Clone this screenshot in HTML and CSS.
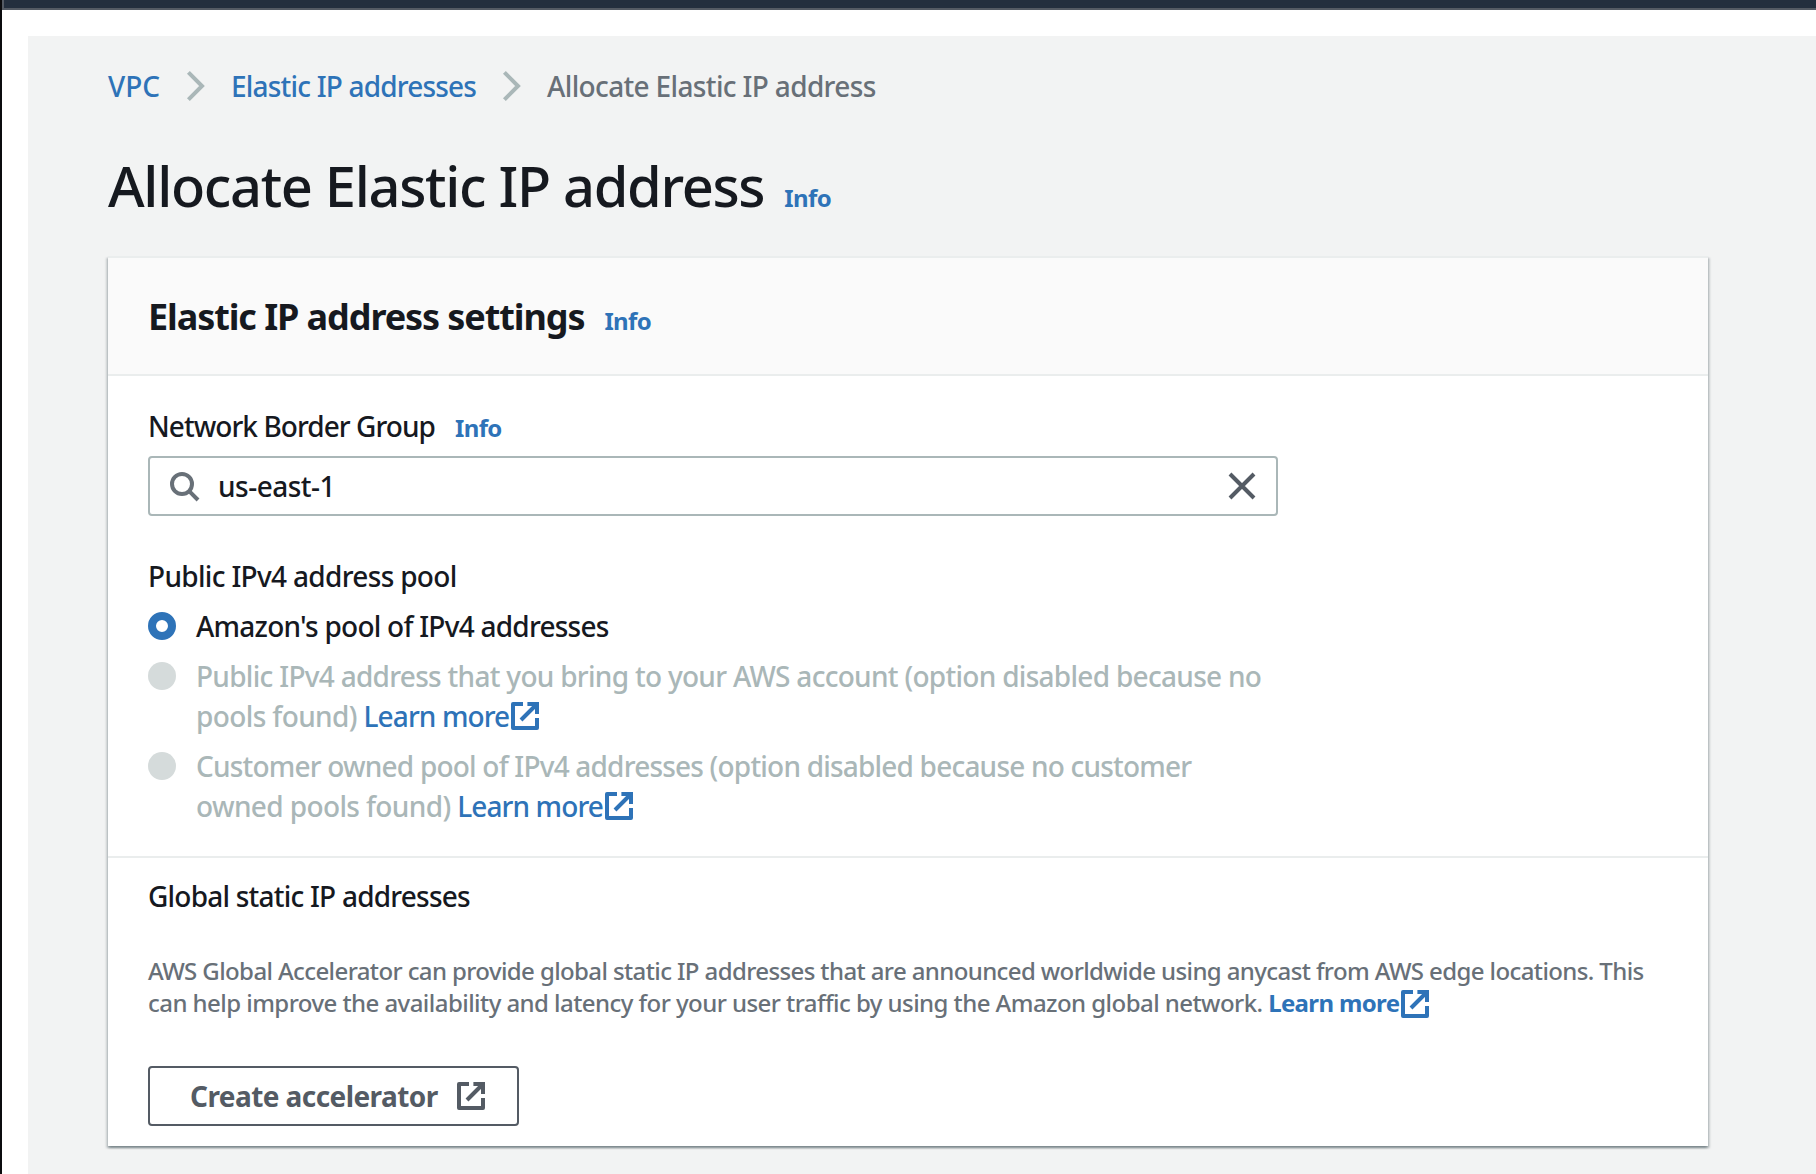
FILE: index.html
```html
<!DOCTYPE html>
<html lang="en">
<head>
<meta charset="utf-8">
<title>Allocate Elastic IP address</title>
<link rel="stylesheet" href="styles.css">
</head>
<body>
<svg class="defs" aria-hidden="true">
  <symbol id="external" viewBox="0 0 16 16"><path d="M7 2H2v12h12V9" fill="none" stroke="currentColor" stroke-width="2" stroke-linejoin="round"/><path d="M9.2 2H14v5M6 10l8-8" fill="none" stroke="currentColor" stroke-width="2"/></symbol>
  <symbol id="chevron" viewBox="0 0 16 16"><path d="M4.2 1.2L11 8l-6.8 6.8" fill="none" stroke="currentColor" stroke-width="2"/></symbol>
  <symbol id="search" viewBox="0 0 16 16"><circle cx="7" cy="7" r="5" fill="none" stroke="currentColor" stroke-width="2"/><path d="M10.6 10.6L15 15" fill="none" stroke="currentColor" stroke-width="2"/></symbol>
  <symbol id="close" viewBox="0 0 16 16"><path d="M2 2l12 12M14 2L2 14" fill="none" stroke="currentColor" stroke-width="2"/></symbol>
</svg>
<div class="window">
  <header class="topbar"></header>
  <main class="content">
    <nav class="breadcrumbs">
      <a class="link">VPC</a>
      <svg class="icon crumb-sep"><use href="#chevron"/></svg>
      <a class="link crumb-parent">Elastic IP addresses</a>
      <svg class="icon crumb-sep"><use href="#chevron"/></svg>
      <span class="crumb-current">Allocate Elastic IP address</span>
    </nav>
    <div class="page-heading">
      <h1 class="page-title">Allocate Elastic IP address</h1>
      <a class="info">Info</a>
    </div>
    <section class="card">
      <div class="card-header">
        <h2 class="card-title">Elastic IP address settings</h2>
        <a class="info">Info</a>
      </div>
      <div class="card-body">
        <div class="field-label"><span class="border-label">Network Border Group</span><a class="info">Info</a></div>
        <div class="search-input">
          <svg class="icon search-icon"><use href="#search"/></svg>
          <span class="search-value">us-east-1</span>
          <svg class="icon close-icon"><use href="#close"/></svg>
        </div>
        <div class="field-label pool-label">Public IPv4 address pool</div>
        <div class="options">
          <div class="option">
            <span class="radio radio-checked"></span>
            <div class="option-text">Amazon's pool of IPv4 addresses</div>
          </div>
          <div class="option option-disabled">
            <span class="radio"></span>
            <div class="option-text"><span class="byoip">Public IPv4 address that you bring to your AWS account (option disabled because no</span><br><span class="option-tail">pools found) </span><a class="link learn">Learn more<svg class="icon external"><use href="#external"/></svg></a></div>
          </div>
          <div class="option option-disabled">
            <span class="radio"></span>
            <div class="option-text"><span class="customer">Customer owned pool of IPv4 addresses (option disabled because no customer</span><br><span class="option-tail">owned pools found) </span><a class="link learn">Learn more<svg class="icon external"><use href="#external"/></svg></a></div>
          </div>
        </div>
      </div>
      <div class="card-section">
        <h3 class="section-title">Global static IP addresses</h3>
        <p class="description">AWS Global Accelerator can provide global static IP addresses that are announced worldwide using anycast from AWS edge locations. This<br><span class="second-line">can help improve the availability and latency for your user traffic by using the Amazon global network. </span><a class="link learn-bold">Learn more<svg class="icon external external-small"><use href="#external"/></svg></a></p>
        <button class="button">Create accelerator<svg class="icon"><use href="#external"/></svg></button>
      </div>
    </section>
  </main>
</div>
</body>
</html>
```
FILE: styles.css
```css
* { box-sizing: border-box; }
body {
  margin: 0;
  font: 500 28px/40px "Noto Sans", "Open Sans", sans-serif;
  color: #16191f;
  background: #fff;
}
h1, h2, h3, p { margin: 0; font-weight: 500; }
.defs { position: absolute; width: 0; height: 0; }
.window {
  height: 1174px;
  border-left: 2px solid #0b0c0e;
  display: flex;
  flex-direction: column;
  overflow: hidden;
}
.topbar {
  height: 10px;
  flex: none;
  background: #232f3e;
  border-bottom: 2px solid #545b64;
  border-left: 2px solid #545b64;
}
.content {
  flex: 1;
  margin: 26px 0 0 26px;
  padding: 30px 108px 0 80px;
  background: #f2f3f3;
  white-space: nowrap;
}
.icon { width: 32px; height: 32px; flex: none; display: block; }
.link { color: #2e73b8; }
.info {
  color: #2e73b8;
  font-size: 24px;
  font-weight: 700;
  letter-spacing: -0.6px;
}
.breadcrumbs { display: flex; align-items: center; height: 40px; }
.crumb-sep { color: #aab7b8; margin: 0 19px 0 20px; }
.crumb-parent { letter-spacing: -0.82px; }
.crumb-current { color: #687078; letter-spacing: -0.65px; }
.page-heading {
  display: flex;
  align-items: baseline;
  gap: 20px;
  margin-top: 43px;
  height: 72px;
}
.page-title { font-size: 56px; line-height: 72px; letter-spacing: -1.33px; }
.card {
  margin-top: 35px;
  width: 1600px;
  height: 890px;
  background: #fff;
  border-top: 2px solid #eaeded;
  box-shadow: 0 2px 2px 0 rgba(0, 28, 36, .3), 2px 2px 2px 0 rgba(0, 28, 36, .15), -2px 2px 2px 0 rgba(0, 28, 36, .15);
}
.card-header {
  display: flex;
  align-items: baseline;
  gap: 20px;
  height: 118px;
  padding: 35px 40px 0;
  background: #fafafa;
  border-bottom: 2px solid #eaeded;
}
.card-title { font-size: 36px; line-height: 48px; font-weight: 700; letter-spacing: -1.09px; }
.card-body { padding: 30px 40px; }
.field-label { height: 40px; letter-spacing: -0.68px; }
.border-label { letter-spacing: -0.95px; margin-right: 20px; }
.search-input {
  display: flex;
  align-items: center;
  width: 1130px;
  height: 60px;
  margin-top: 10px;
  padding: 0 18px;
  border: 2px solid #aab7b8;
  border-radius: 4px;
}
.search-icon { color: #687078; }
.search-value { flex: 1; margin-left: 18px; letter-spacing: -0.5px; }
.close-icon { color: #545b64; }
.pool-label { margin-top: 40px; }
.options { display: grid; gap: 10px; margin-top: 10px; }
.option { display: flex; gap: 20px; letter-spacing: -0.76px; }
.option-disabled { color: #aab7b8; }
.byoip { letter-spacing: -0.71px; }
.customer { letter-spacing: -0.8px; }
.option-tail { letter-spacing: -0.62px; }
.radio {
  width: 28px;
  height: 28px;
  flex: none;
  margin-top: 6px;
  border-radius: 50%;
  background: #d5dbdb;
}
.radio-checked { background: #fff; border: 8.5px solid #2e73b8; }
.learn { letter-spacing: -0.9px; }
.external {
  display: inline-block;
  vertical-align: -5px;
}
.card-section { border-top: 2px solid #eaeded; padding: 18px 40px 20px; }
.section-title { font-size: 28px; letter-spacing: -0.78px; }
.description {
  margin-top: 39px;
  font-size: 24px;
  line-height: 32px;
  letter-spacing: -0.61px;
  color: #687078;
}
.second-line { letter-spacing: -0.555px; }
.learn-bold { font-weight: 700; letter-spacing: -0.65px; }
.external-small { vertical-align: -4px; margin-bottom: -4px; }
.button {
  display: flex;
  align-items: center;
  gap: 17px;
  width: 371px;
  height: 60px;
  margin-top: 47px;
  padding: 0 0 0 40px;
  border: 2px solid #545b64;
  border-radius: 4px;
  background: #fff;
  color: #545b64;
  font: 700 28px/40px "Noto Sans", "Open Sans", sans-serif;
  letter-spacing: -0.57px;
}
```
